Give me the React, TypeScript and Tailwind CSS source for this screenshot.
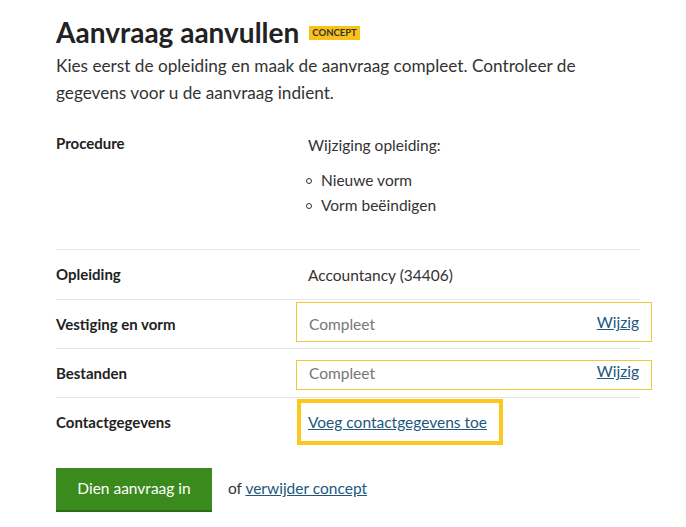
import React from 'react'

const FONT = { fontFamily: 'Lato, "Open Sans", "Liberation Sans", sans-serif' }

function Row({ label, children, border = true, className = '' }: { label: string; children: React.ReactNode; border?: boolean; className?: string }) {
  return (
    <div className={`grid grid-cols-[252px_1fr] ${border ? 'border-t border-[#e6e6e6]' : ''} ${className}`}>
      <div className="text-[15px] font-bold leading-6 text-[#222]">{label}</div>
      <div>{children}</div>
    </div>
  )
}

export default function App() {
  return (
    <div className="min-h-[527px] bg-white text-[#333]" style={FONT}>
      <div className="w-[584px] ml-[56px] pt-[14px]">
        <div className="flex items-center gap-[10px]">
          <h1 className="text-[28px] font-bold leading-9 text-[#222]">Aanvraag aanvullen</h1>
          <span className="mt-[2px] bg-[#f9c11a] px-[3px] text-[9.5px] font-bold leading-[14px] text-[#333]">CONCEPT</span>
        </div>
        <p className="mt-[2px] text-[17.2px] leading-[27px] text-[#333]">
          Kies eerst de opleiding en maak de aanvraag compleet. Controleer de gegevens voor u de aanvraag indient.
        </p>

        <div className="mt-[13px]">
          <Row label="Procedure" border={false} className="pt-3 pb-[31px]">
            <div className="text-[15.5px] leading-6 mt-[2px]">Wijziging opleiding:</div>
            <ul className="mt-[11px] flex flex-col">
              {['Nieuwe vorm', 'Vorm beëindigen'].map(t => (
                <li key={t} className="flex items-center text-[15.5px] leading-[25px]">
                  <span className="ml-[-2px] mr-[9px] inline-block h-[6px] w-[6px] rounded-full border border-[#333]" />
                  {t}
                </li>
              ))}
            </ul>
          </Row>

          <Row label="Opleiding" className="py-3">
            <div className="text-[15.5px] leading-6 mt-[1px]">Accountancy (34406)</div>
          </Row>

          <Row label="Vestiging en vorm" className="py-3">
            <div className="-mx-3 mt-[-10px] mb-[-6px] flex items-start justify-between border border-[#efc73a] px-3 pt-[9px] pb-[5px]">
              <span className="text-[15.5px] leading-6 text-[#767676]">Compleet</span>
              <a href="#" className="text-[15.5px] leading-5 text-[#22577e] underline">Wijzig</a>
            </div>
          </Row>

          <Row label="Bestanden" className="py-3">
            <div className="-mx-3 mt-[-1px] mb-[-5px] flex items-start justify-between border border-[#efc73a] px-3 pb-[4px]">
              <span className="text-[15.5px] leading-6 text-[#767676]">Compleet</span>
              <a href="#" className="text-[15.5px] leading-5 text-[#22577e] underline">Wijzig</a>
            </div>
          </Row>

          <Row label="Contactgegevens" className="pt-[12px]">
            <div className="-ml-[11px] mt-[-13px] mb-[2px] inline-block border-4 border-[#fcc81d] pl-[7px] pr-[12px] py-[7px]">
              <a href="#" className="text-[15.5px] leading-6 text-[#22577e] underline">Voeg contactgegevens toe</a>
            </div>
          </Row>
        </div>

        <div className="mt-[21px] flex items-center gap-4">
          <button className="h-[42px] w-[156px] bg-[#3b8a1e] text-[15.5px] text-white shadow-[0_2px_0_#2c6a14]">Dien aanvraag in</button>
          <span className="text-[15.5px]">
            of <a href="#" className="text-[#22577e] underline">verwijder concept</a>
          </span>
        </div>
      </div>
    </div>
  )
}
